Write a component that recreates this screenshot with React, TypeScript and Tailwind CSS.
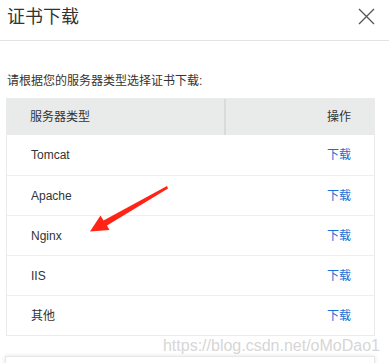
import React from 'react';

const rows = ['Tomcat', 'Apache', 'Nginx', 'IIS', '其他'];

const font = { fontFamily: '"Liberation Sans", "Noto Sans CJK SC", sans-serif' };

const App = () => {
  return (
    <div className="relative w-[389px] h-[363px] overflow-hidden bg-white text-[#333]" style={font}>
      {/* header */}
      <div className="flex h-[41px] items-center justify-between border-b border-[#e3e3e3] pb-[7px] pl-[7px] pr-[14px]">
        <span className="text-[18px] leading-none text-[#333]">证书下载</span>
        <svg width="17" height="17" viewBox="0 0 17 17" className="text-[#555]">
          <path d="M1 1L16 16M16 1L1 16" stroke="currentColor" strokeWidth="1.3" fill="none" />
        </svg>
      </div>

      <div className="px-[6px]">
        <p className="mt-[32px] text-[12px] leading-[16px] pl-[1px]">请根据您的服务器类型选择证书下载:</p>

        <div className="mt-[9px] w-[369px] border border-[#ebebeb] text-[12px]">
          <div className="flex h-[36px] items-center bg-[#e9eaea]">
            <div className="flex h-full w-[219px] items-center border-r-2 border-[#dadada] pl-[23px]">服务器类型</div>
            <div className="flex-1 pr-[23px] text-right">操作</div>
          </div>
          {rows.map((name, i) => (
            <div
              key={name}
              className={`flex h-[40px] items-center ${i > 0 ? 'border-t border-[#efefef]' : ''}`}
            >
              <div className="w-[221px] pl-[24px]">{name}</div>
              <div className="flex-1 pr-[23px] text-right text-[#1a6fd6]">下载</div>
            </div>
          ))}
        </div>

        <div className="h-[20px] pr-[3px] pt-[1px] text-right text-[16px] leading-[17px] text-[#d6d6d6]">
          https://blog.csdn.net/oMoDao1
        </div>

        <div className="ml-[-1px] h-[20px] w-[370px] border border-[#e8e8e8] shadow-[0_0_4px_rgba(0,0,0,0.12)]" />
      </div>

      {/* red annotation arrow */}
      <svg className="absolute left-0 top-0 pointer-events-none" width="389" height="363">
        <polygon
          points="167,186 168,188.5 107,225.5 109.5,230 90,231.5 100.5,215.5 103.5,220.5"
          fill="#ff2415"
        />
      </svg>
    </div>
  );
};

export default App;
